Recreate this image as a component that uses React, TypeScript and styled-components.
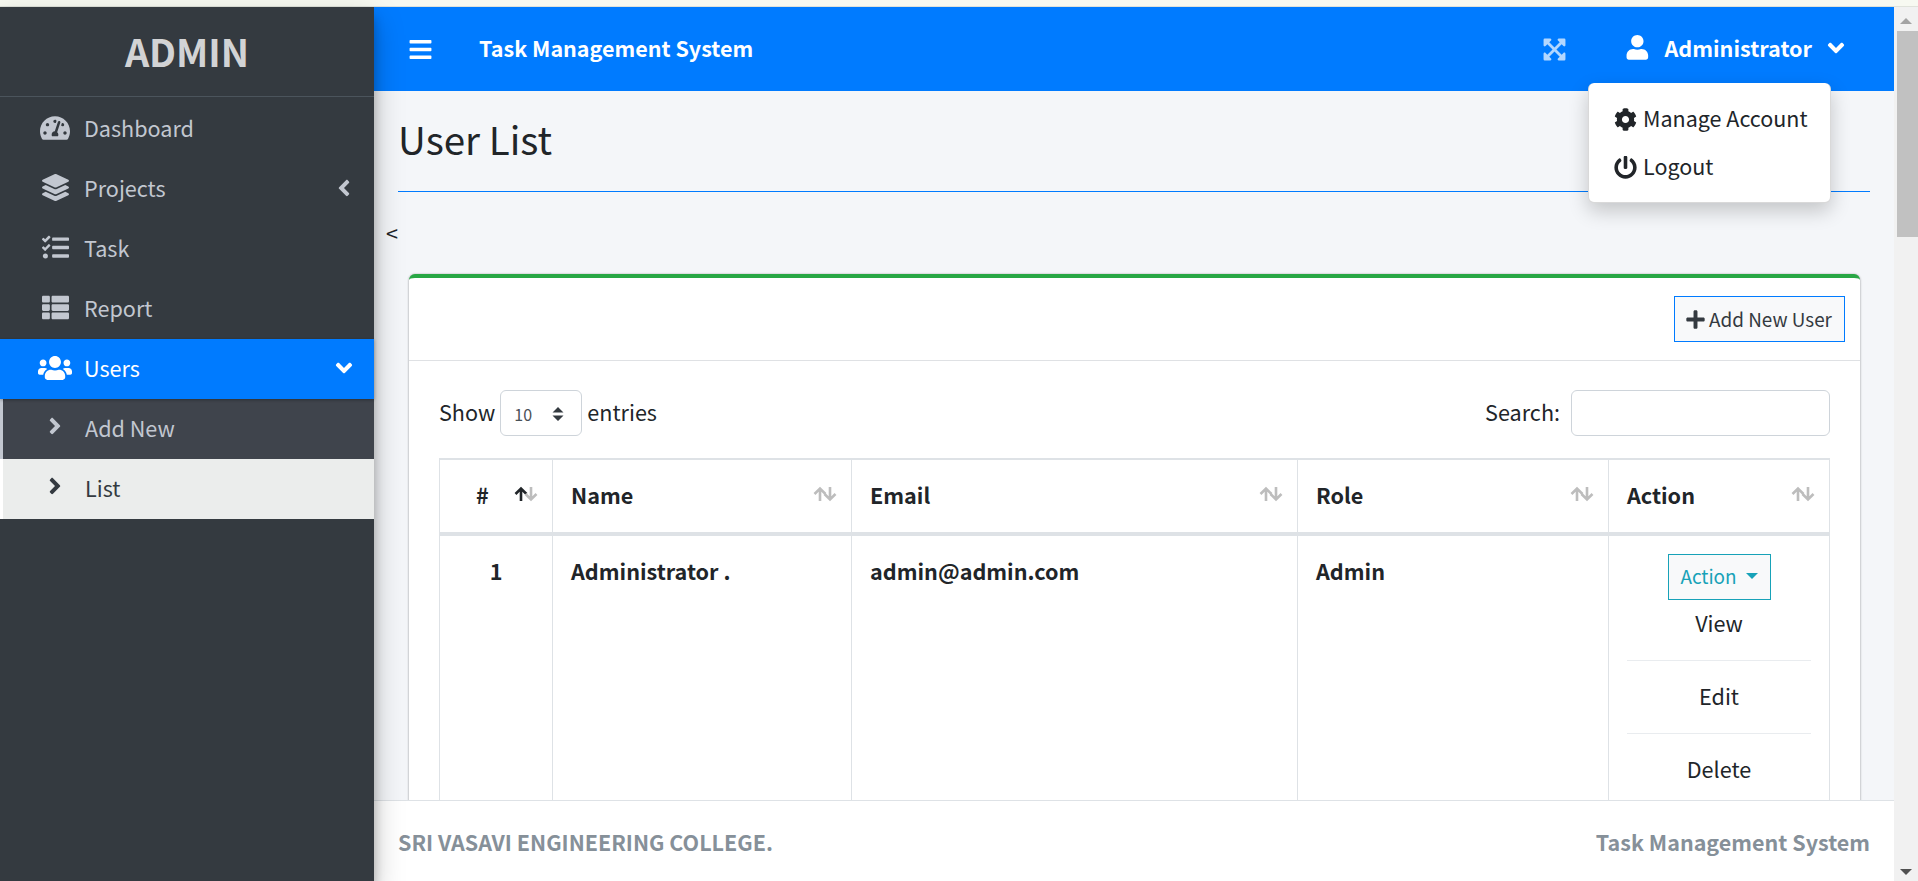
import styled, {createGlobalStyle} from "styled-components";
import {
    FaAngleDown, FaAngleLeft, FaAngleRight, FaBars, FaCog, FaExpandArrowsAlt, FaLayerGroup,
    FaPlus, FaPowerOff, FaTachometerAlt, FaTasks, FaThList, FaUser, FaUsers
} from "react-icons/fa";

const GlobalStyle = createGlobalStyle`
  html, body {
    margin: 0;
    padding: 0;
    height: 100%;
    overflow: hidden;
    font-family: "Noto Sans CJK SC", "Noto Sans", sans-serif;
    color: #212529;
    background: #f4f6f9;
  }
  * { box-sizing: border-box; }
  svg { display: block; flex: none; }
`

const Page = styled.div`
  width: 1918px;
  height: 881px;
  display: flex;
  flex-direction: column;
  overflow: hidden;
`
const TopStrip = styled.div`
  height: 7px;
  flex: none;
  background: #f7f9f1;
  border-bottom: 1px solid #dfe2da;
`
const Body = styled.div`
  flex: 1;
  min-height: 0;
  display: flex;
`
const Sidebar = styled.aside`
  width: 374px;
  flex: none;
  background: #343a40;
  position: relative;
  z-index: 5;
  box-shadow: 0 14px 28px rgba(0,0,0,.25), 0 10px 10px rgba(0,0,0,.22);
`
const Brand = styled.div`
  height: 90px;
  border-bottom: 1px solid #4b545c;
  margin-bottom: 2px;
  display: flex;
  align-items: center;
  justify-content: center;
  padding-bottom: 1px;
  font-size: 37.8px;
  font-weight: 700;
  line-height: 1;
  color: rgba(255,255,255,.8);
`
const MenuRow = styled.div<{$active?: boolean}>`
  height: 60px;
  display: flex;
  align-items: center;
  padding: 0 17px 0 35px;
  font-size: 21.6px;
  line-height: 1;
  color: ${p => p.$active ? "#fff" : "#c2c7d0"};
  background: ${p => p.$active ? "#007bff" : "transparent"};
  box-shadow: ${p => p.$active ? "0 1px 3px rgba(0,0,0,.3)" : "none"};
  position: relative;
  z-index: ${p => p.$active ? 1 : 0};
`
const MenuIcon = styled.span`
  width: 40px;
  flex: none;
  display: flex;
  align-items: center;
  justify-content: center;
  margin-bottom: 3px;
`
const MenuLabel = styled.span`
  margin-left: 9px;
  flex: 1;
  padding-bottom: 3px;
`
const Caret = styled.span`
  font-size: 26px;
  display: flex;
  padding-bottom: 3px;
`
const SubRow = styled.div<{$current?: boolean}>`
  height: 60px;
  display: flex;
  align-items: center;
  padding-left: 39px;
  font-size: 21.6px;
  line-height: 1;
  color: ${p => p.$current ? "#343a40" : "#c2c7d0"};
  background: ${p => p.$current ? "#ebedec" : "#3f444c"};
  border-left: 3px solid ${p => p.$current ? "#fff" : "#c2c7d0"};
`
const SubIcon = styled.span`
  width: 43px;
  flex: none;
  font-size: 26px;
  display: flex;
  padding-bottom: 7px;
`
const SubLabel = styled.span`
  padding-bottom: 3px;
`

const Main = styled.main`
  flex: 1;
  min-width: 0;
  display: flex;
  flex-direction: column;
`
const Navbar = styled.header`
  height: 84px;
  flex: none;
  background: #007bff;
  color: #fff;
  display: flex;
  align-items: center;
  padding: 0 45px 0 34px;
  position: relative;
`
const Burger = styled.span`
  font-size: 25px;
  display: flex;
  width: 71px;
`
const AppName = styled.span`
  font-size: 21.5px;
  font-weight: 700;
  flex: 1;
  padding-bottom: 3px;
`
const Expand = styled.span`
  font-size: 25px;
  display: flex;
  color: rgba(255,255,255,.7);
  margin-right: 58px;
`
const UserName = styled.span`
  font-size: 21.6px;
  font-weight: 700;
  margin: 0 11px 0 15px;
  padding-bottom: 3px;
`
const UserIcon = styled.span`
  font-size: 24.7px;
  display: flex;
  padding-bottom: 3px;
`
const ChevronBox = styled.span`
  font-size: 26px;
  display: flex;
  padding-bottom: 3px;
`
const AccountMenu = styled.div`
  position: absolute;
  top: 76px;
  left: 1214px;
  width: 243px;
  height: 120px;
  background: #fff;
  border-radius: 6px;
  border: 1px solid rgba(0,0,0,.15);
  border-top: none;
  box-shadow: 0 8px 20px rgba(0,0,0,.2);
  padding: 12px 24px 12px 25px;
  z-index: 10;
  color: #212529;
`
const AccountRow = styled.div`
  height: 48px;
  display: flex;
  align-items: center;
  gap: 6px;
  font-size: 21.5px;
  white-space: nowrap;
  span { padding-bottom: 3px; }
  svg { font-size: 23px; }
`

const Content = styled.div`
  flex: 1;
  min-height: 0;
  overflow: hidden;
  padding: 0 24px;
  position: relative;
`
const Title = styled.h1`
  margin: 0;
  height: 101px;
  font-size: 38.6px;
  font-weight: 400;
  line-height: 94px;
  color: #212529;
  border-bottom: 1px solid #007bff;
`
const Stray = styled.div`
  margin: 28px 0 0 -12px;
  height: 25px;
  font-size: 21.6px;
  line-height: 25px;
`
const Card = styled.section`
  margin: 29px 10px 0 11px;
  background: #fff;
  border-top: 4px solid #28a745;
  border-radius: 6px;
  box-shadow: 0 0 2px rgba(0,0,0,.25), 0 1px 3px rgba(0,0,0,.2);
`
const CardHeader = styled.div`
  height: 83px;
  border-bottom: 1px solid #dfe1e4;
  display: flex;
  justify-content: flex-end;
  padding: 18px 15px 0 0;
`
const AddButton = styled.button`
  width: 171px;
  height: 46px;
  border: 1px solid #007bff;
  background: #f8f9fa;
  color: #343a40;
  font: 400 18.9px "Noto Sans CJK SC", sans-serif;
  display: flex;
  align-items: center;
  justify-content: center;
  gap: 3px;
  padding: 0 2px 0 0;
  span { padding-bottom: 1px; }
  svg { font-size: 21px; }
`
const CardBody = styled.div`
  padding: 29px 30px 0;
`
const FilterBar = styled.div`
  display: flex;
  justify-content: space-between;
  align-items: center;
  height: 46px;
  margin-bottom: 22px;
  font-size: 21.6px;
`
const FilterGroup = styled.label`
  display: flex;
  align-items: center;
  gap: 5px;
  > span { padding-bottom: 3px; }
`
const EntriesSelect = styled.div`
  width: 82px;
  height: 46px;
  border: 1px solid #ced4da;
  border-radius: 6px;
  background: #fff;
  display: flex;
  align-items: center;
  justify-content: space-between;
  padding: 2px 17px 0 13px;
  font-size: 16px;
  color: #495057;
`
const SearchInput = styled.div`
  width: 259px;
  height: 46px;
  border: 1px solid #ced4da;
  border-radius: 6px;
  background: #fff;
  margin-left: 6px;
`
const Table = styled.table`
  width: 1390px;
  table-layout: fixed;
  border-collapse: collapse;
  font-size: 21.6px;
  border-top: 2px solid #dee2e6;
`
const Th = styled.th<{$center?: boolean}>`
  height: 75px;
  border: 1px solid #dee2e6;
  border-top: none;
  border-bottom: 4px solid #dee2e6;
  padding: 0 17px 3px 18px;
  font-weight: 700;
  text-align: left;
  position: relative;
  padding-left: ${p => p.$center ? "36px" : "18px"};
`
const Td = styled.td<{$center?: boolean}>`
  border: 1px solid #dee2e6;
  border-top: none;
  vertical-align: top;
  padding: 18px 18px 0;
  font-weight: 700;
  line-height: 34px;
  text-align: ${p => p.$center ? "center" : "left"};
`
const SortArrows = styled.svg`
  position: absolute;
  right: 14px;
  top: 26px;
  width: 24px;
  height: 16px;
`
const ActionCell = styled.td`
  border: 1px solid #dee2e6;
  border-top: none;
  vertical-align: top;
  padding: 18px 18px 0;
  text-align: center;
  font-weight: 400;
`
const ActionButton = styled.button`
  width: 103px;
  height: 46px;
  border: 1px solid #17a2b8;
  background: #f8f9fa;
  color: #17a2b8;
  font: 400 18.9px "Noto Sans CJK SC", sans-serif;
  padding: 0 0 3px;
  display: inline-flex;
  align-items: center;
  justify-content: center;
  gap: 9px;
  &::after {
    content: "";
    width: 0;
    height: 0;
    margin-top: 1px;
    border-top: 6px solid #17a2b8;
    border-left: 6px solid transparent;
    border-right: 6px solid transparent;
  }
`
const ActionItem = styled.div<{$first?: boolean}>`
  height: 73px;
  line-height: 70px;
  margin-top: ${p => p.$first ? "-12px" : "0"};
  border-bottom: 1px solid #e9ecef;
  &:last-child { border-bottom: none; }
`
const Footer = styled.footer`
  height: 81px;
  flex: none;
  background: #fff;
  border-top: 1px solid #dee2e6;
  display: flex;
  align-items: center;
  justify-content: space-between;
  padding: 0 24px;
  font-size: 21.5px;
  font-weight: 700;
  color: #869099;
  position: relative;
`
const Scrollbar = styled.div`
  width: 24px;
  flex: none;
  background: #f1f1f1;
  display: flex;
  flex-direction: column;
  align-items: center;
  padding-top: 11px;
  height: 100%;
`
const ScrollUp = styled.div`
  width: 0;
  height: 0;
  border-left: 6px solid transparent;
  border-right: 6px solid transparent;
  border-bottom: 6px solid #a3a3a3;
  margin-bottom: 7px;
`
const ScrollThumb = styled.div`
  width: 21px;
  height: 206px;
  margin-left: 2px;
  background: #c1c1c1;
`
const ScrollDown = styled.div`
  width: 0;
  height: 0;
  margin-top: auto;
  margin-bottom: 6px;
  border-left: 6px solid transparent;
  border-right: 6px solid transparent;
  border-top: 6px solid #505050;
`

const menu = [
    {label: "Dashboard", icon: <FaTachometerAlt size={30} />},
    {label: "Projects", icon: <FaLayerGroup size={27} />, caret: <FaAngleLeft />},
    {label: "Task", icon: <FaTasks size={27} />},
    {label: "Report", icon: <FaThList size={27} />},
    {label: "Users", icon: <FaUsers size={34} />, caret: <FaAngleDown />, active: true},
]

function Sort({up}: {up?: boolean}) {
    return <SortArrows viewBox="0 0 24 16" fill="none" strokeWidth="2.6">
        <path d="M7 15V2.5M1.5 8l5.5-5.5L12.5 8" stroke={up ? "#212529" : "#bdbdbd"} />
        <path d="M17 1v12.5M11.5 8l5.5 5.5L22.5 8" stroke="#bdbdbd" />
    </SortArrows>
}

export default function App() {
    return <Page>
        <GlobalStyle />
        <TopStrip />
        <Body>
            <Sidebar>
                <Brand>ADMIN</Brand>
                {menu.map(m => <MenuRow key={m.label} $active={m.active}>
                    <MenuIcon>{m.icon}</MenuIcon>
                    <MenuLabel>{m.label}</MenuLabel>
                    {m.caret && <Caret>{m.caret}</Caret>}
                </MenuRow>)}
                <SubRow>
                    <SubIcon><FaAngleRight /></SubIcon>
                    <SubLabel>Add New</SubLabel>
                </SubRow>
                <SubRow $current>
                    <SubIcon><FaAngleRight /></SubIcon>
                    <SubLabel>List</SubLabel>
                </SubRow>
            </Sidebar>
            <Main>
                <Navbar>
                    <Burger><FaBars /></Burger>
                    <AppName>Task Management System</AppName>
                    <Expand><FaExpandArrowsAlt /></Expand>
                    <UserIcon><FaUser /></UserIcon>
                    <UserName>Administrator</UserName>
                    <ChevronBox><FaAngleDown /></ChevronBox>
                    <AccountMenu>
                        <AccountRow><FaCog /><span>Manage Account</span></AccountRow>
                        <AccountRow><FaPowerOff /><span>Logout</span></AccountRow>
                    </AccountMenu>
                </Navbar>
                <Content>
                    <Title>User List</Title>
                    <Stray>&lt;</Stray>
                    <Card>
                        <CardHeader>
                            <AddButton><FaPlus /><span>Add New User</span></AddButton>
                        </CardHeader>
                        <CardBody>
                            <FilterBar>
                                <FilterGroup>
                                    <span>Show</span>
                                    <EntriesSelect>
                                        10
                                        <svg width="12" height="16" viewBox="0 0 12 16" fill="#343a40">
                                            <path d="M6 1l5.5 5.5H.5zM6 15L.5 9.5h11z" />
                                        </svg>
                                    </EntriesSelect>
                                    <span>entries</span>
                                </FilterGroup>
                                <FilterGroup>
                                    <span>Search:</span>
                                    <SearchInput />
                                </FilterGroup>
                            </FilterBar>
                            <Table>
                                <colgroup>
                                    <col width="113" />
                                    <col width="299" />
                                    <col width="446" />
                                    <col width="311" />
                                    <col width="221" />
                                </colgroup>
                                <thead>
                                    <tr>
                                        <Th $center>#<Sort up /></Th>
                                        <Th>Name<Sort /></Th>
                                        <Th>Email<Sort /></Th>
                                        <Th>Role<Sort /></Th>
                                        <Th>Action<Sort /></Th>
                                    </tr>
                                </thead>
                                <tbody>
                                    <tr>
                                        <Td $center>1</Td>
                                        <Td>Administrator .</Td>
                                        <Td>admin@admin.com</Td>
                                        <Td>Admin</Td>
                                        <ActionCell>
                                            <ActionButton>Action</ActionButton>
                                            <ActionItem $first>View</ActionItem>
                                            <ActionItem>Edit</ActionItem>
                                            <ActionItem>Delete</ActionItem>
                                        </ActionCell>
                                    </tr>
                                </tbody>
                            </Table>
                        </CardBody>
                    </Card>
                </Content>
                <Footer>
                    <span>SRI VASAVI ENGINEERING COLLEGE.</span>
                    <span>Task Management System</span>
                </Footer>
            </Main>
            <Scrollbar>
                <ScrollUp />
                <ScrollThumb />
                <ScrollDown />
            </Scrollbar>
        </Body>
    </Page>
}
